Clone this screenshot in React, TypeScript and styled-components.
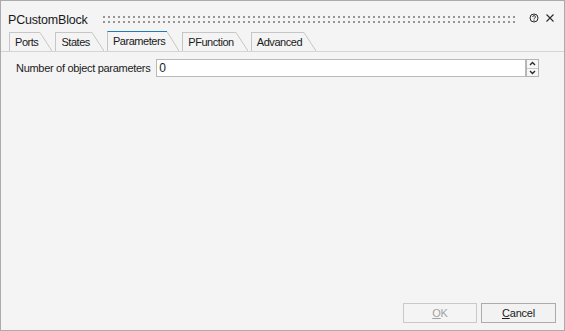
import styled, { createGlobalStyle } from "styled-components";

const GlobalStyle = createGlobalStyle`
  html, body {
    margin: 0;
    padding: 0;
    background: #f4f4f4;
  }
  body {
    font-family: "Liberation Sans", Arial, sans-serif;
    color: #1b1b1b;
  }
`;

const Window = styled.div`
  width: 565px;
  height: 331px;
  box-sizing: border-box;
  border: 1px solid #ababab;
  background: #f4f4f4;
  display: flex;
  flex-direction: column;
`;

const TitleBar = styled.div`
  display: flex;
  align-items: flex-start;
  height: 30px;
  box-sizing: border-box;
  padding: 12px 9px 0 7px;
`;

const Title = styled.div`
  font-size: 12.5px;
  line-height: 14px;
  letter-spacing: -0.2px;
  color: #1a1a1a;
`;

const Grip = styled.div`
  flex: 1;
  height: 7px;
  margin: 3px 11px 0 15px;
  background-image: linear-gradient(to right, transparent 2px, #f4f4f4 2px),
    linear-gradient(to bottom, #959595 2px, transparent 2px);
  background-size: 5px 5px;
`;

const TitleIcons = styled.div`
  display: flex;
  gap: 6px;
  color: #2b2b2b;
`;

const TabStrip = styled.div`
  display: flex;
  align-items: flex-end;
  gap: 3px;
  height: 21px;
  box-sizing: border-box;
  padding-left: 8px;
  border-bottom: 1px solid #d4d4d4;
`;

const Tab = styled.div<{ active: boolean }>`
  display: flex;
  height: ${({ active }) => (active ? 20 : 19)}px;
`;

const TabBody = styled.div<{ active: boolean }>`
  display: flex;
  align-items: center;
  padding: 0 2px 1px 5px;
  border-left: 1px solid #c6c6c6;
  border-top: 1px solid ${({ active }) => (active ? "#1f7db5" : "#c6c6c6")};
  font-size: 11px;
  letter-spacing: -0.45px;
  color: #1a1a1a;
  white-space: nowrap;
`;

const TabSlant = styled.svg`
  display: block;
  width: 12px;
  height: 100%;
`;

const Content = styled.div`
  display: flex;
  align-items: center;
  padding: 7px 25px 0 15px;
`;

const Label = styled.label`
  font-size: 11px;
  letter-spacing: -0.3px;
  margin-right: 6px;
  white-space: nowrap;
`;

const NumberField = styled.div`
  flex: 1;
  display: flex;
  height: 18px;
`;

const Input = styled.div`
  flex: 1;
  box-sizing: border-box;
  border: 1px solid #b9b9b9;
  background: #ffffff;
  font-size: 12px;
  line-height: 16px;
  padding-left: 2px;
`;

const Spin = styled.div`
  width: 13px;
  box-sizing: border-box;
  border: 1px solid #b3b3b3;
  display: flex;
  flex-direction: column;
  background: #f7f7f7;
`;

const SpinHalf = styled.div<{ bottom?: boolean }>`
  flex: 1;
  display: flex;
  align-items: center;
  justify-content: center;
  border-top: ${({ bottom }) => (bottom ? "1px solid #c8c8c8" : "none")};
`;

const Spacer = styled.div`
  flex: 1;
`;

const Footer = styled.div`
  display: flex;
  justify-content: flex-end;
  gap: 4px;
  padding: 0 8px 7px 0;
`;

const Button = styled.button<{ width: number; disabled?: boolean }>`
  width: ${({ width }) => width}px;
  height: 20px;
  box-sizing: border-box;
  padding: 0;
  border: 1px solid ${({ disabled }) => (disabled ? "#c9c9c9" : "#acacac")};
  background: ${({ disabled }) => (disabled ? "#f4f4f4" : "#f2f2f2")};
  color: ${({ disabled }) => (disabled ? "#a2a2a2" : "#1a1a1a")};
  font-family: "Liberation Sans", Arial, sans-serif;
  font-size: 11px;
  letter-spacing: -0.2px;
`;

const tabs = ["Ports", "States", "Parameters", "PFunction", "Advanced"];

function HelpIcon() {
  return (
    <svg width="10" height="10" viewBox="0 0 10 10" fill="none" stroke="currentColor">
      <circle cx="5" cy="5" r="4" strokeWidth="1" />
      <path d="M3.7 4 a1.35 1.35 0 1 1 1.9 1.2 c-0.4 0.2 -0.6 0.5 -0.6 0.9 v0.3" strokeWidth="1" />
      <circle cx="5" cy="7.5" r="0.6" fill="currentColor" stroke="none" />
    </svg>
  );
}

function CloseIcon() {
  return (
    <svg width="10" height="10" viewBox="0 0 10 10" stroke="currentColor" strokeWidth="1.1">
      <path d="M1.5 1.5 L8.5 8.5 M8.5 1.5 L1.5 8.5" />
    </svg>
  );
}

function Arrow({ down }: { down?: boolean }) {
  return (
    <svg width="7" height="5" viewBox="0 0 7 5" fill="none" stroke="#2a2a2a" strokeWidth="1.4">
      <path d={down ? "M1 1 L3.5 3.5 L6 1" : "M1 4 L3.5 1.5 L6 4"} />
    </svg>
  );
}

export default function App() {
  const active = "Parameters";
  return (
    <>
      <GlobalStyle />
      <Window>
        <TitleBar>
          <Title>PCustomBlock</Title>
          <Grip />
          <TitleIcons>
            <HelpIcon />
            <CloseIcon />
          </TitleIcons>
        </TitleBar>
        <TabStrip>
          {tabs.map((name) => {
            const isActive = name === active;
            const h = isActive ? 20 : 19;
            return (
              <Tab key={name} active={isActive}>
                <TabBody active={isActive}>{name}</TabBody>
                <TabSlant viewBox={`0 0 12 ${h}`} preserveAspectRatio="none">
                  <line x1="0" y1="0.5" x2="12" y2={h} stroke="#c6c6c6" strokeWidth="1" />
                </TabSlant>
              </Tab>
            );
          })}
        </TabStrip>
        <Content>
          <Label>Number of object parameters</Label>
          <NumberField>
            <Input>0</Input>
            <Spin>
              <SpinHalf>
                <Arrow />
              </SpinHalf>
              <SpinHalf bottom>
                <Arrow down />
              </SpinHalf>
            </Spin>
          </NumberField>
        </Content>
        <Spacer />
        <Footer>
          <Button width={74} disabled>
            <u>O</u>K
          </Button>
          <Button width={75}>
            <u>C</u>ancel
          </Button>
        </Footer>
      </Window>
    </>
  );
}
